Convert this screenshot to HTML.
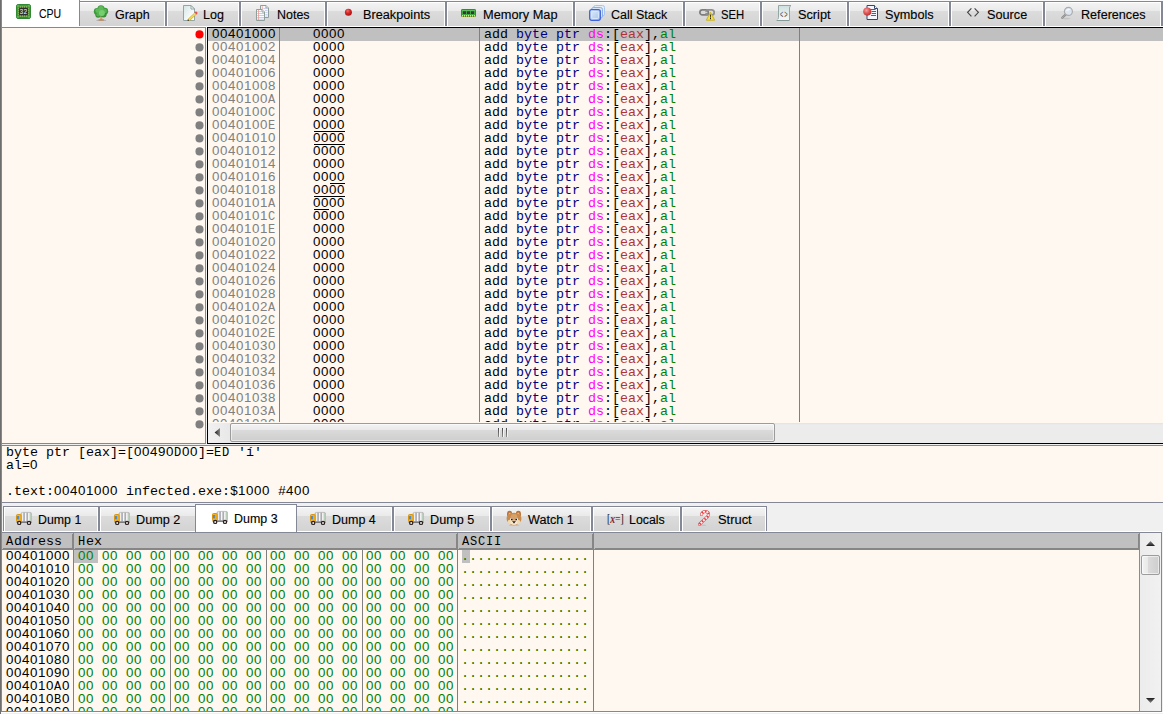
<!DOCTYPE html>
<html lang="en"><head><meta charset="utf-8"><title>x32dbg</title>
<style>
*{box-sizing:border-box;margin:0;padding:0}
html,body{width:1163px;height:714px;overflow:hidden;background:#f0f0f0}
body{position:relative;font-family:"Liberation Sans",sans-serif;font-size:12.5px;color:#000}
.a{position:absolute}
.m{font-family:"Liberation Mono",monospace;font-size:13.333px;line-height:13px;white-space:pre}
.tab{position:absolute;top:1px;height:25px;border:1px solid #848896;border-bottom:0;
 background:linear-gradient(#f4f4f4 0,#eaeaea 9px,#dcdcdc 9px,#d3d3d3 100%);box-shadow:inset 1px 1px 0 #fff,inset -1px 0 0 #fff}
.tab.on{background:#fff;box-shadow:none}
.tl{position:absolute;white-space:pre;line-height:16px;height:16px;transform-origin:0 0;-webkit-text-stroke:.12px #000}
.ic{position:absolute;width:16px;height:16px;overflow:visible}
.row{position:absolute;left:0;height:13px;width:1163px}
.row>span{position:absolute;top:0}
.ad{left:212px;color:#808080}
.by{left:313px}
.in{left:484px}
.k{color:#000080}.s{color:#f0f}.r{color:#b03434}.g{color:#008300}
.bl{position:absolute;left:195.5px;width:8px;height:8px;border-radius:50%;background:#808080}
.vs{position:absolute;width:1px;background:#808080}
.hx{color:#008000}
.d{font-family:"Liberation Sans",sans-serif;letter-spacing:.5847px;word-spacing:3.7109px;line-height:0}
.u{font-size:12px;letter-spacing:.8px;line-height:0}
</style></head>
<body>
<div class="a" style="left:0;top:0;width:1163px;height:28px;background:#f0f0f0"></div>
<div class="a" style="left:0;top:0;width:1163px;height:1px;background:#fbfbfb"></div>
<div class="tab" style="left:78px;width:88px;top:1px"></div><div class="ic" style="left:93px;top:5px"><svg width="16" height="16" viewBox="0 0 16 16"><ellipse cx="8.2" cy="15.4" rx="5" ry="0.9" fill="#b5b5b5"/><path d="M7 15 L7.4 10.5 L9.2 10.5 L9.4 15 Z" fill="#d9a066"/><path d="M8.3 12 L10.3 10" stroke="#c98a4b" stroke-width="1"/><rect x="5.4" y="14.4" width="5.6" height="1.1" rx="0.4" fill="#b8763a"/><circle cx="8" cy="3.8" r="3.6" fill="#3f983c"/><circle cx="4.2" cy="6.4" r="3.4" fill="#3f983c"/><circle cx="11.8" cy="6.2" r="3.4" fill="#3f983c"/><circle cx="5.2" cy="9.8" r="2.9" fill="#3a8f37"/><circle cx="10.6" cy="9.6" r="3" fill="#3a8f37"/><circle cx="8" cy="7" r="4" fill="#48a544"/><circle cx="8" cy="3.6" r="2.6" fill="#5fbb59"/><circle cx="4.6" cy="5.8" r="2.3" fill="#5fbb59"/><circle cx="11.6" cy="6" r="2.3" fill="#58b353"/><circle cx="5.2" cy="9.6" r="2" fill="#55b050"/><circle cx="8.8" cy="8" r="3" fill="#74d06d"/></svg></div><div class="tl" style="left:114.87px;top:7px;transform:scaleX(0.9970)">Graph</div><div class="tab" style="left:166px;width:74px;top:1px"></div><div class="ic" style="left:182px;top:5px"><svg width="16" height="16" viewBox="0 0 16 16"><defs><linearGradient id="gpg" x1="0" y1="0" x2="1" y2="1"><stop offset="0" stop-color="#d5e4e4"/><stop offset="0.6" stop-color="#f4f8f8"/><stop offset="1" stop-color="#fff"/></linearGradient></defs><path d="M1.5 0.5 H9 L12.5 4 V15.5 H1.5 Z" fill="url(#gpg)" stroke="#93a5a5" stroke-width="1"/><path d="M9 0.5 V4 H12.5 Z" fill="#fff" stroke="#93a5a5" stroke-width="1" stroke-linejoin="round"/><path d="M6.3 15.4 L13.4 8.6" stroke="#c9a21e" stroke-width="2.6"/><path d="M6.3 15.4 L13.4 8.6" stroke="#f4dc4e" stroke-width="1.6"/><path d="M5.6 16 L6 14.3 L7.4 15.6 Z" fill="#222"/><circle cx="14" cy="8" r="1.5" fill="#e8504c"/><path d="M12.7 9.2 L13.3 8.6" stroke="#eee" stroke-width="1.4"/></svg></div><div class="tl" style="left:202.57px;top:7px;transform:scaleX(1.0040)">Log</div><div class="tab" style="left:240px;width:86px;top:1px"></div><div class="ic" style="left:255px;top:5px"><svg width="16" height="16" viewBox="0 0 16 16"><path d="M5.5 0.5 H11 L13.5 3 V12.5 H5.5 Z" fill="#f7f9ff" stroke="#8f9f9c"/><path d="M11 0.5 V3 H13.5" fill="#fff" stroke="#8f9f9c"/><path d="M7.3 1.2 V5" stroke="#eb9a9a" stroke-width="0.8"/><g stroke="#bcc8ee" stroke-width="0.8"><path d="M8.4 3.5H12.6M10 5.5H12.6M10.4 7.5H12.6M10.4 9.5H12.6M10.4 11H12.6"/></g><path d="M1.5 4.5 H7 L9.5 7 V15.5 H1.5 Z" fill="#fbfcff" stroke="#8f9f9c"/><path d="M7 4.5 V7 H9.5" fill="#fff" stroke="#8f9f9c"/><g stroke="#b4c1ee" stroke-width="0.8"><path d="M2.2 6.5H6.6M2.2 8.5H9M2.2 10.5H9M2.2 12.5H9M2.2 14.2H9"/></g><path d="M3.5 5 V15" stroke="#ee9a9a" stroke-width="0.8"/></svg></div><div class="tl" style="left:276.58px;top:7px;transform:scaleX(0.9975)">Notes</div><div class="tab" style="left:326px;width:120px;top:1px"></div><div class="ic" style="left:340.5px;top:5px"><svg width="16" height="16" viewBox="0 0 16 16"><defs><radialGradient id="gbp" cx="0.4" cy="0.3" r="0.75"><stop offset="0" stop-color="#f07070"/><stop offset="0.45" stop-color="#d62525"/><stop offset="1" stop-color="#a01212"/></radialGradient></defs><circle cx="7.4" cy="7.3" r="3.5" fill="url(#gbp)"/></svg></div><div class="tl" style="left:362.56px;top:7px;transform:scaleX(1.0165)">Breakpoints</div><div class="tab" style="left:446px;width:128px;top:1px"></div><div class="ic" style="left:461px;top:5px"><svg width="16" height="16" viewBox="0 0 16 16"><rect x="0.5" y="4.5" width="14" height="7" rx="0.6" fill="#3fa53f" stroke="#2f8f2f"/><rect x="1" y="5" width="13" height="1" fill="#5cc05c"/><g fill="#3a3340"><rect x="2" y="6.3" width="3" height="2.7"/><rect x="6" y="6.3" width="3" height="2.7"/><rect x="10" y="6.3" width="3" height="2.7"/></g><g fill="#f0dc7a"><rect x="1" y="10" width="1" height="1.6"/><rect x="3" y="10" width="1" height="1.6"/><rect x="5" y="10" width="1" height="1.6"/><rect x="7" y="10" width="1" height="1.6"/><rect x="9" y="10" width="1" height="1.6"/><rect x="11" y="10" width="1" height="1.6"/><rect x="13" y="10" width="1" height="1.6"/></g></svg></div><div class="tl" style="left:482.55px;top:7px;transform:scaleX(1.0227)">Memory Map</div><div class="tab" style="left:574px;width:110px;top:1px"></div><div class="ic" style="left:589px;top:5px"><svg width="16" height="16" viewBox="0 0 16 16"><defs><linearGradient id="gst" x1="0" y1="0" x2="1" y2="1"><stop offset="0" stop-color="#e4eefa"/><stop offset="1" stop-color="#9fc0ea"/></linearGradient></defs><rect x="4.5" y="0.5" width="11" height="10.5" rx="2" fill="#e4edf8" stroke="#a9c4ea"/><rect x="2.5" y="2.5" width="11" height="10.5" rx="2" fill="#d6e4f6" stroke="#8eb0e2"/><rect x="0.7" y="4.7" width="10.6" height="10.6" rx="2" fill="url(#gst)" stroke="#3d63e0" stroke-width="1.3"/><rect x="2.6" y="6.6" width="6.8" height="6.8" rx="0.8" fill="none" stroke="#dbe8f8" stroke-width="1"/></svg></div><div class="tl" style="left:610.86px;top:7px;transform:scaleX(1.0009)">Call Stack</div><div class="tab" style="left:684px;width:77px;top:1px"></div><div class="ic" style="left:699px;top:5px"><svg width="16" height="16" viewBox="0 0 16 16"><rect x="0.9" y="4.9" width="8.4" height="5" rx="2.5" fill="none" stroke="#7d7d7d" stroke-width="1.7"/><rect x="7" y="4.9" width="8.2" height="5" rx="2.5" fill="none" stroke="#8e8e8e" stroke-width="1.7"/><path d="M2.6 7.4 H8" stroke="#d8d8d8" stroke-width="1"/><path d="M11.5 7.3 L15.7 15.2 H7.3 Z" fill="#f5e13c" stroke="#c8ae16" stroke-width="0.9" stroke-linejoin="round"/><rect x="11" y="9.6" width="1" height="1.2" fill="#111"/><rect x="11" y="11.3" width="1" height="1.2" fill="#111"/><rect x="11" y="13.1" width="1" height="1.1" fill="#111"/></svg></div><div class="tl" style="left:721.09px;top:7px;transform:scaleX(0.9040)">SEH</div><div class="tab" style="left:761px;width:87px;top:1px"></div><div class="ic" style="left:776px;top:5px"><svg width="16" height="16" viewBox="0 0 16 16"><defs><linearGradient id="gsc" x1="0" y1="0" x2="0" y2="1"><stop offset="0" stop-color="#cfe0df"/><stop offset="1" stop-color="#f6f9f9"/></linearGradient></defs><path d="M2.5 0.5 H15 Q13.5 1.2 13.5 3 V15 H1 Q2.5 14 2.5 12.5 Z" fill="url(#gsc)" stroke="#93a7a5" stroke-width="1"/><path d="M1.4 14.7 H13" stroke="#f6fafa" stroke-width="1.2"/><path d="M0.6 15.6 H13.4" stroke="#7f9492" stroke-width="1"/><text transform="translate(3.9 12.6) scale(.62 1.2)" font-family="Liberation Sans,sans-serif" font-size="9" fill="#4a4a4a" letter-spacing="1.6">&lt;&gt;</text></svg></div><div class="tl" style="left:798.22px;top:7px;transform:scaleX(1.0194)">Script</div><div class="tab" style="left:848px;width:102px;top:1px"></div><div class="ic" style="left:863px;top:5px"><svg width="16" height="16" viewBox="0 0 16 16"><path d="M4 0.5 H11.5 L14.5 3.5 V14.5 H4 Z" fill="#f4f7ff" stroke="#34466a" stroke-width="1"/><path d="M11.5 0.5 V3.5 H14.5" fill="#fff" stroke="#34466a" stroke-width="1"/><g stroke="#2f5fe0" stroke-width="1"><path d="M7 4.5H12.6M8.6 6.5H13M8.6 8.5H13M8 10.5H13"/></g><defs><radialGradient id="gsy" cx="0.4" cy="0.35" r="0.75"><stop offset="0" stop-color="#f3a3a0"/><stop offset="0.5" stop-color="#dc5452"/><stop offset="1" stop-color="#b02424"/></radialGradient></defs><circle cx="4.3" cy="6.6" r="4.1" fill="url(#gsy)"/></svg></div><div class="tl" style="left:885.02px;top:7px;transform:scaleX(1.0147)">Symbols</div><div class="tab" style="left:950px;width:94px;top:1px"></div><div class="ic" style="left:966px;top:5px"><svg width="16" height="16" viewBox="0 0 16 16"><path d="M5.4 3.3 L1.6 7.3 L5.4 11.3 M8.6 3.3 L12.4 7.3 L8.6 11.3" fill="none" stroke="#444" stroke-width="1.15"/></svg></div><div class="tl" style="left:987.02px;top:7px;transform:scaleX(1.0160)">Source</div><div class="tab" style="left:1044px;width:118px;top:1px"></div><div class="ic" style="left:1060px;top:5px"><svg width="16" height="16" viewBox="0 0 16 16"><ellipse cx="6" cy="13.6" rx="4.5" ry="0.8" fill="#c4c4c4"/><path d="M2.2 12.8 L5.6 9.6" stroke="#8d8d8d" stroke-width="2.2" stroke-linecap="round"/><path d="M2.4 12.6 L5.6 9.6" stroke="#d8d8d8" stroke-width="0.8" stroke-dasharray="0.8 0.8"/><circle cx="8.4" cy="6.4" r="4" fill="#dce6f2" stroke="#ababab" stroke-width="1.2"/><path d="M5.8 6.2 A2.8 2.8 0 0 1 10.4 4.4 L8.6 5.6 Z" fill="#f4f8fc"/></svg></div><div class="tl" style="left:1080.87px;top:7px;transform:scaleX(1.0089)">References</div><div class="tab on" style="left:1px;width:79px;top:-1px;height:28px"></div><div class="ic" style="left:16px;top:4px"><svg width="16" height="16" viewBox="0 0 16 16"><rect x="0.5" y="0.5" width="14" height="14" rx="1.6" fill="#3f9f41" stroke="#2f8a33" stroke-width="1"/><rect x="1" y="13" width="13" height="1.5" fill="#2c7d30" opacity="0.6"/><g fill="#ead98a"><rect x="4" y="2.6" width="1" height="1.9"/><rect x="4" y="10.5" width="1" height="1.9"/><rect x="6" y="2.6" width="1" height="1.9"/><rect x="6" y="10.5" width="1" height="1.9"/><rect x="8" y="2.6" width="1" height="1.9"/><rect x="8" y="10.5" width="1" height="1.9"/><rect x="10" y="2.6" width="1" height="1.9"/><rect x="10" y="10.5" width="1" height="1.9"/><rect x="2.6" y="4" width="1.9" height="1"/><rect x="10.5" y="4" width="1.9" height="1"/><rect x="2.6" y="6" width="1.9" height="1"/><rect x="10.5" y="6" width="1.9" height="1"/><rect x="2.6" y="8" width="1.9" height="1"/><rect x="10.5" y="8" width="1.9" height="1"/><rect x="2.6" y="10" width="1.9" height="1"/><rect x="10.5" y="10" width="1.9" height="1"/><rect x="1.5" y="1.5" width="1" height="1"/><rect x="12.5" y="1.5" width="1" height="1"/><rect x="1.5" y="12.5" width="1" height="1"/><rect x="12.5" y="12.5" width="1" height="1"/></g><rect x="3" y="3.6" width="9" height="7.8" rx="1" fill="#2e2e2e"/><text x="7.5" y="9.8" font-family="Liberation Mono,monospace" font-size="6.3" fill="#f4f4f4" text-anchor="middle" letter-spacing="0.2">32</text></svg></div><div class="tl" style="left:38.67px;top:6px;transform:scaleX(0.8390)">CPU</div>
<div class="tab" style="left:1162px;width:40px;top:1px"></div>
<div class="a" style="left:2px;top:26px;width:1161px;height:1px;background:#fff"></div>
<div class="a" style="left:1px;top:27px;width:206px;height:1px;background:#848896"></div>
<div class="a" style="left:2px;top:28px;width:1161px;height:416px;background:#fff8f0"></div>
<div class="a" style="left:205px;top:27px;width:1px;height:417px;background:#848896"></div>
<div class="a" style="left:206px;top:26px;width:1px;height:419px;background:#f4f4f4"></div>
<div class="a" style="left:2px;top:443px;width:204px;height:1px;background:#848896"></div>
<div class="a" style="left:207px;top:27px;width:956px;height:1px;background:#000"></div>
<div class="a" style="left:207px;top:27px;width:1px;height:417px;background:#000"></div>
<div class="a" style="left:207px;top:443px;width:956px;height:1px;background:#000"></div>
<div class="a" style="left:208px;top:28px;width:955px;height:13px;background:#c0c0c0"></div>
<div class="vs" style="left:279px;top:28px;height:394px"></div>
<div class="vs" style="left:479px;top:28px;height:394px"></div>
<div class="vs" style="left:799px;top:28px;height:394px"></div>
<div class="a m" style="left:0;top:28px;width:1163px;height:394px;overflow:hidden">
<div class="row" style="top:0px"><span class="ad" style="color:#000"><span class="d">00401000</span></span><span class="by"><span class="d">0000</span></span><span class="in">add <span class="k">byte ptr</span> <span class="s">ds</span>:[<span class="r">eax</span>],<span class="g">al</span></span></div>
<div class="row" style="top:13px"><span class="ad"><span class="d">00401002</span></span><span class="by"><span class="d">0000</span></span><span class="in">add <span class="k">byte ptr</span> <span class="s">ds</span>:[<span class="r">eax</span>],<span class="g">al</span></span></div>
<div class="row" style="top:26px"><span class="ad"><span class="d">00401004</span></span><span class="by"><span class="d">0000</span></span><span class="in">add <span class="k">byte ptr</span> <span class="s">ds</span>:[<span class="r">eax</span>],<span class="g">al</span></span></div>
<div class="row" style="top:39px"><span class="ad"><span class="d">00401006</span></span><span class="by"><span class="d">0000</span></span><span class="in">add <span class="k">byte ptr</span> <span class="s">ds</span>:[<span class="r">eax</span>],<span class="g">al</span></span></div>
<div class="row" style="top:52px"><span class="ad"><span class="d">00401008</span></span><span class="by"><span class="d">0000</span></span><span class="in">add <span class="k">byte ptr</span> <span class="s">ds</span>:[<span class="r">eax</span>],<span class="g">al</span></span></div>
<div class="row" style="top:65px"><span class="ad"><span class="d">0040100</span><span class="u">A</span></span><span class="by"><span class="d">0000</span></span><span class="in">add <span class="k">byte ptr</span> <span class="s">ds</span>:[<span class="r">eax</span>],<span class="g">al</span></span></div>
<div class="row" style="top:78px"><span class="ad"><span class="d">0040100</span><span class="u">C</span></span><span class="by"><span class="d">0000</span></span><span class="in">add <span class="k">byte ptr</span> <span class="s">ds</span>:[<span class="r">eax</span>],<span class="g">al</span></span></div>
<div class="row" style="top:91px"><span class="ad"><span class="d">0040100</span><span class="u">E</span></span><span class="by"><span class="d">0000</span></span><span class="in">add <span class="k">byte ptr</span> <span class="s">ds</span>:[<span class="r">eax</span>],<span class="g">al</span></span></div>
<div class="row" style="top:104px"><span class="ad"><span class="d">00401010</span></span><span class="by"><span class="d">0000</span></span><span class="in">add <span class="k">byte ptr</span> <span class="s">ds</span>:[<span class="r">eax</span>],<span class="g">al</span></span></div>
<div class="row" style="top:117px"><span class="ad"><span class="d">00401012</span></span><span class="by"><span class="d">0000</span></span><span class="in">add <span class="k">byte ptr</span> <span class="s">ds</span>:[<span class="r">eax</span>],<span class="g">al</span></span></div>
<div class="row" style="top:130px"><span class="ad"><span class="d">00401014</span></span><span class="by"><span class="d">0000</span></span><span class="in">add <span class="k">byte ptr</span> <span class="s">ds</span>:[<span class="r">eax</span>],<span class="g">al</span></span></div>
<div class="row" style="top:143px"><span class="ad"><span class="d">00401016</span></span><span class="by"><span class="d">0000</span></span><span class="in">add <span class="k">byte ptr</span> <span class="s">ds</span>:[<span class="r">eax</span>],<span class="g">al</span></span></div>
<div class="row" style="top:156px"><span class="ad"><span class="d">00401018</span></span><span class="by"><span class="d">0000</span></span><span class="in">add <span class="k">byte ptr</span> <span class="s">ds</span>:[<span class="r">eax</span>],<span class="g">al</span></span></div>
<div class="row" style="top:169px"><span class="ad"><span class="d">0040101</span><span class="u">A</span></span><span class="by"><span class="d">0000</span></span><span class="in">add <span class="k">byte ptr</span> <span class="s">ds</span>:[<span class="r">eax</span>],<span class="g">al</span></span></div>
<div class="row" style="top:182px"><span class="ad"><span class="d">0040101</span><span class="u">C</span></span><span class="by"><span class="d">0000</span></span><span class="in">add <span class="k">byte ptr</span> <span class="s">ds</span>:[<span class="r">eax</span>],<span class="g">al</span></span></div>
<div class="row" style="top:195px"><span class="ad"><span class="d">0040101</span><span class="u">E</span></span><span class="by"><span class="d">0000</span></span><span class="in">add <span class="k">byte ptr</span> <span class="s">ds</span>:[<span class="r">eax</span>],<span class="g">al</span></span></div>
<div class="row" style="top:208px"><span class="ad"><span class="d">00401020</span></span><span class="by"><span class="d">0000</span></span><span class="in">add <span class="k">byte ptr</span> <span class="s">ds</span>:[<span class="r">eax</span>],<span class="g">al</span></span></div>
<div class="row" style="top:221px"><span class="ad"><span class="d">00401022</span></span><span class="by"><span class="d">0000</span></span><span class="in">add <span class="k">byte ptr</span> <span class="s">ds</span>:[<span class="r">eax</span>],<span class="g">al</span></span></div>
<div class="row" style="top:234px"><span class="ad"><span class="d">00401024</span></span><span class="by"><span class="d">0000</span></span><span class="in">add <span class="k">byte ptr</span> <span class="s">ds</span>:[<span class="r">eax</span>],<span class="g">al</span></span></div>
<div class="row" style="top:247px"><span class="ad"><span class="d">00401026</span></span><span class="by"><span class="d">0000</span></span><span class="in">add <span class="k">byte ptr</span> <span class="s">ds</span>:[<span class="r">eax</span>],<span class="g">al</span></span></div>
<div class="row" style="top:260px"><span class="ad"><span class="d">00401028</span></span><span class="by"><span class="d">0000</span></span><span class="in">add <span class="k">byte ptr</span> <span class="s">ds</span>:[<span class="r">eax</span>],<span class="g">al</span></span></div>
<div class="row" style="top:273px"><span class="ad"><span class="d">0040102</span><span class="u">A</span></span><span class="by"><span class="d">0000</span></span><span class="in">add <span class="k">byte ptr</span> <span class="s">ds</span>:[<span class="r">eax</span>],<span class="g">al</span></span></div>
<div class="row" style="top:286px"><span class="ad"><span class="d">0040102</span><span class="u">C</span></span><span class="by"><span class="d">0000</span></span><span class="in">add <span class="k">byte ptr</span> <span class="s">ds</span>:[<span class="r">eax</span>],<span class="g">al</span></span></div>
<div class="row" style="top:299px"><span class="ad"><span class="d">0040102</span><span class="u">E</span></span><span class="by"><span class="d">0000</span></span><span class="in">add <span class="k">byte ptr</span> <span class="s">ds</span>:[<span class="r">eax</span>],<span class="g">al</span></span></div>
<div class="row" style="top:312px"><span class="ad"><span class="d">00401030</span></span><span class="by"><span class="d">0000</span></span><span class="in">add <span class="k">byte ptr</span> <span class="s">ds</span>:[<span class="r">eax</span>],<span class="g">al</span></span></div>
<div class="row" style="top:325px"><span class="ad"><span class="d">00401032</span></span><span class="by"><span class="d">0000</span></span><span class="in">add <span class="k">byte ptr</span> <span class="s">ds</span>:[<span class="r">eax</span>],<span class="g">al</span></span></div>
<div class="row" style="top:338px"><span class="ad"><span class="d">00401034</span></span><span class="by"><span class="d">0000</span></span><span class="in">add <span class="k">byte ptr</span> <span class="s">ds</span>:[<span class="r">eax</span>],<span class="g">al</span></span></div>
<div class="row" style="top:351px"><span class="ad"><span class="d">00401036</span></span><span class="by"><span class="d">0000</span></span><span class="in">add <span class="k">byte ptr</span> <span class="s">ds</span>:[<span class="r">eax</span>],<span class="g">al</span></span></div>
<div class="row" style="top:364px"><span class="ad"><span class="d">00401038</span></span><span class="by"><span class="d">0000</span></span><span class="in">add <span class="k">byte ptr</span> <span class="s">ds</span>:[<span class="r">eax</span>],<span class="g">al</span></span></div>
<div class="row" style="top:377px"><span class="ad"><span class="d">0040103</span><span class="u">A</span></span><span class="by"><span class="d">0000</span></span><span class="in">add <span class="k">byte ptr</span> <span class="s">ds</span>:[<span class="r">eax</span>],<span class="g">al</span></span></div>
<div class="row" style="top:390px"><span class="ad"><span class="d">0040103</span><span class="u">C</span></span><span class="by"><span class="d">0000</span></span><span class="in">add <span class="k">byte ptr</span> <span class="s">ds</span>:[<span class="r">eax</span>],<span class="g">al</span></span></div>
</div>
<svg class="a" style="left:190px;top:28px" width="16" height="415" viewBox="0 0 16 415"><circle cx="9.5" cy="6.4" r="4.05" fill="#ff0000"/><circle cx="9.5" cy="19.4" r="4.05" fill="#808080"/><circle cx="9.5" cy="32.4" r="4.05" fill="#808080"/><circle cx="9.5" cy="45.4" r="4.05" fill="#808080"/><circle cx="9.5" cy="58.4" r="4.05" fill="#808080"/><circle cx="9.5" cy="71.4" r="4.05" fill="#808080"/><circle cx="9.5" cy="84.4" r="4.05" fill="#808080"/><circle cx="9.5" cy="97.4" r="4.05" fill="#808080"/><circle cx="9.5" cy="110.4" r="4.05" fill="#808080"/><circle cx="9.5" cy="123.4" r="4.05" fill="#808080"/><circle cx="9.5" cy="136.4" r="4.05" fill="#808080"/><circle cx="9.5" cy="149.4" r="4.05" fill="#808080"/><circle cx="9.5" cy="162.4" r="4.05" fill="#808080"/><circle cx="9.5" cy="175.4" r="4.05" fill="#808080"/><circle cx="9.5" cy="188.4" r="4.05" fill="#808080"/><circle cx="9.5" cy="201.4" r="4.05" fill="#808080"/><circle cx="9.5" cy="214.4" r="4.05" fill="#808080"/><circle cx="9.5" cy="227.4" r="4.05" fill="#808080"/><circle cx="9.5" cy="240.4" r="4.05" fill="#808080"/><circle cx="9.5" cy="253.4" r="4.05" fill="#808080"/><circle cx="9.5" cy="266.4" r="4.05" fill="#808080"/><circle cx="9.5" cy="279.4" r="4.05" fill="#808080"/><circle cx="9.5" cy="292.4" r="4.05" fill="#808080"/><circle cx="9.5" cy="305.4" r="4.05" fill="#808080"/><circle cx="9.5" cy="318.4" r="4.05" fill="#808080"/><circle cx="9.5" cy="331.4" r="4.05" fill="#808080"/><circle cx="9.5" cy="344.4" r="4.05" fill="#808080"/><circle cx="9.5" cy="357.4" r="4.05" fill="#808080"/><circle cx="9.5" cy="370.4" r="4.05" fill="#808080"/><circle cx="9.5" cy="383.4" r="4.05" fill="#808080"/><circle cx="9.5" cy="396.4" r="4.05" fill="#808080"/></svg>
<div class="a" style="left:314px;top:131px;width:31px;height:1px;background:#000"></div>
<div class="a" style="left:314px;top:144px;width:31px;height:1px;background:#000"></div>
<div class="a" style="left:330px;top:183px;width:15px;height:1px;background:#000"></div>
<div class="a" style="left:314px;top:196px;width:31px;height:1px;background:#000"></div>
<div class="a" style="left:314px;top:209px;width:15px;height:1px;background:#000"></div>
<div class="a" style="left:208px;top:423px;width:955px;height:20px;background:linear-gradient(#e2e2e2 0,#ececec 2px,#ececec 100%)"></div>
<div class="a" style="left:208px;top:423px;width:22px;height:20px;background:linear-gradient(90deg,#f1f1f1,#e8e8e8)"></div>
<svg class="a" style="left:213px;top:426px" width="9" height="13" viewBox="0 0 9 13"><defs><linearGradient id="ga" x1="0" x2="1" y1="0" y2="0"><stop offset="0" stop-color="#1a1a1a"/><stop offset="1" stop-color="#8a8a8a"/></linearGradient></defs><path d="M1.6 6.5 L7 2 L7 11 Z" fill="url(#ga)"/></svg>
<div class="a" style="left:230px;top:423px;width:545px;height:19px;border:1px solid #9c9c9c;border-radius:2px;background:linear-gradient(#f2f2f2 0,#e9e9e9 6px,#dbdbdb 6px,#cecece 100%);box-shadow:inset 0 0 0 1px rgba(255,255,255,.55)"></div>
<div class="a" style="left:498px;top:428px;width:1px;height:9px;background:linear-gradient(#4a4a4a,#8a8a8a)"></div>
<div class="a" style="left:499px;top:428px;width:1px;height:9px;background:#f4f4f4"></div>
<div class="a" style="left:502px;top:428px;width:1px;height:9px;background:linear-gradient(#4a4a4a,#8a8a8a)"></div>
<div class="a" style="left:503px;top:428px;width:1px;height:9px;background:#f4f4f4"></div>
<div class="a" style="left:506px;top:428px;width:1px;height:9px;background:linear-gradient(#4a4a4a,#8a8a8a)"></div>
<div class="a" style="left:507px;top:428px;width:1px;height:9px;background:#f4f4f4"></div>
<div class="a" style="left:1px;top:444px;width:1162px;height:1px;background:#f0f0f0"></div>
<div class="a" style="left:1px;top:445px;width:1162px;height:58px;background:#fff8f0;border-top:1px solid #848896;border-bottom:1px solid #848896;border-left:1px solid #848896"></div>
<div class="a m" style="left:6px;top:446px;height:13px">byte ptr [eax]=[<span class="d">00490</span><span class="u">D</span><span class="d">00</span>]=<span class="u">ED</span> 'í'</div>
<div class="a m" style="left:6px;top:459px;height:13px">al=<span class="d">0</span></div>
<div class="a m" style="left:6px;top:485px;height:13px">.text:<span class="d">00401000</span> infected.exe:$<span class="d">1000</span> #<span class="d">400</span></div>
<div class="a" style="left:1px;top:503px;width:1162px;height:30px;background:#f0f0f0"></div>
<div class="a" style="left:2px;top:531px;width:1160px;height:1px;background:#fff"></div>
<div class="a" style="left:1px;top:532px;width:1161px;height:1px;background:#848896"></div>
<div class="tab" style="left:3px;width:96px;top:506px"></div><div class="ic" style="left:16px;top:510px"><svg width="16" height="16" viewBox="0 0 16 16"><defs><linearGradient id="gdu" x1="0" y1="0" x2="1" y2="0"><stop offset="0" stop-color="#a9a9b3"/><stop offset="0.12" stop-color="#fafafa"/><stop offset="0.3" stop-color="#9a9aa4"/><stop offset="0.42" stop-color="#fafafa"/><stop offset="0.6" stop-color="#a2a2a8"/><stop offset="0.72" stop-color="#fafafa"/><stop offset="0.9" stop-color="#b9ccb9"/><stop offset="1" stop-color="#d8d8d8"/></linearGradient></defs><rect x="5" y="2.4" width="10.6" height="9.4" rx="1.5" fill="url(#gdu)" stroke="#b3b3b3" stroke-width="0.8"/><rect x="0.5" y="4.5" width="4.6" height="7.2" rx="1" fill="#f7b51f" stroke="#d9950f"/><rect x="1" y="6" width="2.2" height="3.4" fill="#4f8ccc"/><rect x="0.6" y="11.6" width="15" height="1.2" fill="#666"/><circle cx="3.2" cy="12.9" r="1.6" fill="#e8e8e8" stroke="#2a1c1c" stroke-width="1.2"/><circle cx="13" cy="12.9" r="1.6" fill="#e8e8e8" stroke="#2a1c1c" stroke-width="1.2"/></svg></div><div class="tl" style="left:37.99px;top:512px;transform:scaleX(0.9897)">Dump 1</div><div class="tab" style="left:99px;width:98px;top:506px"></div><div class="ic" style="left:114px;top:510px"><svg width="16" height="16" viewBox="0 0 16 16"><defs><linearGradient id="gdu" x1="0" y1="0" x2="1" y2="0"><stop offset="0" stop-color="#a9a9b3"/><stop offset="0.12" stop-color="#fafafa"/><stop offset="0.3" stop-color="#9a9aa4"/><stop offset="0.42" stop-color="#fafafa"/><stop offset="0.6" stop-color="#a2a2a8"/><stop offset="0.72" stop-color="#fafafa"/><stop offset="0.9" stop-color="#b9ccb9"/><stop offset="1" stop-color="#d8d8d8"/></linearGradient></defs><rect x="5" y="2.4" width="10.6" height="9.4" rx="1.5" fill="url(#gdu)" stroke="#b3b3b3" stroke-width="0.8"/><rect x="0.5" y="4.5" width="4.6" height="7.2" rx="1" fill="#f7b51f" stroke="#d9950f"/><rect x="1" y="6" width="2.2" height="3.4" fill="#4f8ccc"/><rect x="0.6" y="11.6" width="15" height="1.2" fill="#666"/><circle cx="3.2" cy="12.9" r="1.6" fill="#e8e8e8" stroke="#2a1c1c" stroke-width="1.2"/><circle cx="13" cy="12.9" r="1.6" fill="#e8e8e8" stroke="#2a1c1c" stroke-width="1.2"/></svg></div><div class="tl" style="left:135.66px;top:512px;transform:scaleX(1.0139)">Dump 2</div><div class="tab" style="left:295px;width:98px;top:506px"></div><div class="ic" style="left:310px;top:510px"><svg width="16" height="16" viewBox="0 0 16 16"><defs><linearGradient id="gdu" x1="0" y1="0" x2="1" y2="0"><stop offset="0" stop-color="#a9a9b3"/><stop offset="0.12" stop-color="#fafafa"/><stop offset="0.3" stop-color="#9a9aa4"/><stop offset="0.42" stop-color="#fafafa"/><stop offset="0.6" stop-color="#a2a2a8"/><stop offset="0.72" stop-color="#fafafa"/><stop offset="0.9" stop-color="#b9ccb9"/><stop offset="1" stop-color="#d8d8d8"/></linearGradient></defs><rect x="5" y="2.4" width="10.6" height="9.4" rx="1.5" fill="url(#gdu)" stroke="#b3b3b3" stroke-width="0.8"/><rect x="0.5" y="4.5" width="4.6" height="7.2" rx="1" fill="#f7b51f" stroke="#d9950f"/><rect x="1" y="6" width="2.2" height="3.4" fill="#4f8ccc"/><rect x="0.6" y="11.6" width="15" height="1.2" fill="#666"/><circle cx="3.2" cy="12.9" r="1.6" fill="#e8e8e8" stroke="#2a1c1c" stroke-width="1.2"/><circle cx="13" cy="12.9" r="1.6" fill="#e8e8e8" stroke="#2a1c1c" stroke-width="1.2"/></svg></div><div class="tl" style="left:332.07px;top:512px;transform:scaleX(1.0005)">Dump 4</div><div class="tab" style="left:393px;width:98px;top:506px"></div><div class="ic" style="left:408px;top:510px"><svg width="16" height="16" viewBox="0 0 16 16"><defs><linearGradient id="gdu" x1="0" y1="0" x2="1" y2="0"><stop offset="0" stop-color="#a9a9b3"/><stop offset="0.12" stop-color="#fafafa"/><stop offset="0.3" stop-color="#9a9aa4"/><stop offset="0.42" stop-color="#fafafa"/><stop offset="0.6" stop-color="#a2a2a8"/><stop offset="0.72" stop-color="#fafafa"/><stop offset="0.9" stop-color="#b9ccb9"/><stop offset="1" stop-color="#d8d8d8"/></linearGradient></defs><rect x="5" y="2.4" width="10.6" height="9.4" rx="1.5" fill="url(#gdu)" stroke="#b3b3b3" stroke-width="0.8"/><rect x="0.5" y="4.5" width="4.6" height="7.2" rx="1" fill="#f7b51f" stroke="#d9950f"/><rect x="1" y="6" width="2.2" height="3.4" fill="#4f8ccc"/><rect x="0.6" y="11.6" width="15" height="1.2" fill="#666"/><circle cx="3.2" cy="12.9" r="1.6" fill="#e8e8e8" stroke="#2a1c1c" stroke-width="1.2"/><circle cx="13" cy="12.9" r="1.6" fill="#e8e8e8" stroke="#2a1c1c" stroke-width="1.2"/></svg></div><div class="tl" style="left:429.66px;top:512px;transform:scaleX(1.0114)">Dump 5</div><div class="tab" style="left:491px;width:101px;top:506px"></div><div class="ic" style="left:506px;top:510px"><svg width="16" height="16" viewBox="0 0 16 16"><ellipse cx="8" cy="15.3" rx="5.5" ry="0.8" fill="#c2c2c2"/><ellipse cx="3.6" cy="4.2" rx="2.6" ry="3.4" fill="#b8733a"/><ellipse cx="12.4" cy="4.2" rx="2.6" ry="3.4" fill="#b8733a"/><ellipse cx="3.8" cy="4.6" rx="1.3" ry="2.2" fill="#e6b27a"/><ellipse cx="12.2" cy="4.6" rx="1.3" ry="2.2" fill="#e6b27a"/><ellipse cx="8" cy="9" rx="7.4" ry="6.2" fill="#c98a4c"/><ellipse cx="8" cy="7.2" rx="3.4" ry="3.2" fill="#d9a063"/><ellipse cx="4.2" cy="12" rx="2.6" ry="2.2" fill="#f0d9b0"/><ellipse cx="11.8" cy="12" rx="2.6" ry="2.2" fill="#f0d9b0"/><ellipse cx="8" cy="12.6" rx="3.4" ry="2.4" fill="#f7e8cc"/><circle cx="5.4" cy="9.2" r="1.2" fill="#fff"/><circle cx="10.6" cy="9.2" r="1.2" fill="#fff"/><circle cx="5.8" cy="9.4" r="0.9" fill="#1f1408"/><circle cx="10.2" cy="9.4" r="0.9" fill="#1f1408"/><path d="M6.6 11.4 H9.4 L8 13.2 Z" fill="#2a1a20" stroke="#2a1a20" stroke-width="0.6" stroke-linejoin="round"/></svg></div><div class="tl" style="left:528.44px;top:512px;transform:scaleX(1.0070)">Watch 1</div><div class="tab" style="left:592px;width:89px;top:506px"></div><div class="ic" style="left:606.5px;top:510px"><svg width="17" height="16" viewBox="0 0 17 16"><text x="0" y="12.6" font-family="Liberation Serif,serif" font-size="11.5" fill="#111" textLength="16.8" lengthAdjust="spacingAndGlyphs">[<tspan fill="#8b2323" font-style="italic" font-weight="bold">x</tspan><tspan fill="#444">=</tspan>]</text></svg></div><div class="tl" style="left:628.59px;top:512px;transform:scaleX(0.9897)">Locals</div><div class="tab" style="left:681px;width:86px;top:506px"></div><div class="ic" style="left:696px;top:510px"><svg width="16" height="16" viewBox="0 0 16 16"><ellipse cx="6" cy="15.3" rx="4.5" ry="0.7" fill="#c4c4c4"/><path d="M3.6 14.2 L11.2 7 Q13.4 4.6 12 2.6 Q10.2 0.8 7.6 1.9 Q5.8 2.8 5.5 4.6" fill="none" stroke="#d9383c" stroke-width="3" stroke-linecap="round"/><path d="M3.6 14.2 L11.2 7 Q13.4 4.6 12 2.6 Q10.2 0.8 7.6 1.9 Q5.8 2.8 5.5 4.6" fill="none" stroke="#fdf3f3" stroke-width="2" stroke-linecap="round"/><path d="M3.6 14.2 L11.2 7 Q13.4 4.6 12 2.6 Q10.2 0.8 7.6 1.9 Q5.8 2.8 5.5 4.6" fill="none" stroke="#e0393e" stroke-width="2" stroke-dasharray="1.5 1.9"/></svg></div><div class="tl" style="left:718.11px;top:512px;transform:scaleX(1.0316)">Struct</div><div class="tab on" style="left:195px;width:102px;top:504px;height:28px"></div><div class="ic" style="left:212px;top:509px"><svg width="16" height="16" viewBox="0 0 16 16"><defs><linearGradient id="gdu" x1="0" y1="0" x2="1" y2="0"><stop offset="0" stop-color="#a9a9b3"/><stop offset="0.12" stop-color="#fafafa"/><stop offset="0.3" stop-color="#9a9aa4"/><stop offset="0.42" stop-color="#fafafa"/><stop offset="0.6" stop-color="#a2a2a8"/><stop offset="0.72" stop-color="#fafafa"/><stop offset="0.9" stop-color="#b9ccb9"/><stop offset="1" stop-color="#d8d8d8"/></linearGradient></defs><rect x="5" y="2.4" width="10.6" height="9.4" rx="1.5" fill="url(#gdu)" stroke="#b3b3b3" stroke-width="0.8"/><rect x="0.5" y="4.5" width="4.6" height="7.2" rx="1" fill="#f7b51f" stroke="#d9950f"/><rect x="1" y="6" width="2.2" height="3.4" fill="#4f8ccc"/><rect x="0.6" y="11.6" width="15" height="1.2" fill="#666"/><circle cx="3.2" cy="12.9" r="1.6" fill="#e8e8e8" stroke="#2a1c1c" stroke-width="1.2"/><circle cx="13" cy="12.9" r="1.6" fill="#e8e8e8" stroke="#2a1c1c" stroke-width="1.2"/></svg></div><div class="tl" style="left:233.68px;top:511px;transform:scaleX(0.9954)">Dump 3</div>
<div class="a" style="left:2px;top:533px;width:1159px;height:178px;background:#fff8f0"></div>
<div class="a" style="left:1161px;top:532px;width:1px;height:180px;background:#848896"></div>
<div class="a" style="left:1px;top:711px;width:1161px;height:1px;background:#848896"></div>
<div class="a" style="left:1px;top:712px;width:1162px;height:1px;background:#fff"></div>
<div class="a" style="left:2px;top:533px;width:1138px;height:17px;background:#868686"></div>
<div class="a" style="left:2px;top:533px;width:70px;height:15px;background:#c0c0c0;box-shadow:1px 0 0 #c0c0c0"></div>
<div class="a" style="left:72px;top:534px;width:1px;height:14px;background:#868686"></div>
<div class="a" style="left:2px;top:548px;width:1px;height:1px;background:#c0c0c0"></div>
<div class="a" style="left:74px;top:533px;width:382px;height:15px;background:#c0c0c0;box-shadow:1px 0 0 #c0c0c0"></div>
<div class="a" style="left:456px;top:534px;width:1px;height:14px;background:#868686"></div>
<div class="a" style="left:74px;top:548px;width:1px;height:1px;background:#c0c0c0"></div>
<div class="a" style="left:458px;top:533px;width:134px;height:15px;background:#c0c0c0;box-shadow:1px 0 0 #c0c0c0"></div>
<div class="a" style="left:592px;top:534px;width:1px;height:14px;background:#868686"></div>
<div class="a" style="left:458px;top:548px;width:1px;height:1px;background:#c0c0c0"></div>
<div class="a" style="left:594px;top:533px;width:544px;height:15px;background:#c0c0c0;box-shadow:1px 0 0 #c0c0c0"></div>
<div class="a" style="left:1138px;top:534px;width:1px;height:14px;background:#868686"></div>
<div class="a" style="left:594px;top:548px;width:1px;height:1px;background:#c0c0c0"></div>
<div class="vs" style="left:73px;top:550px;height:161px"></div>
<div class="vs" style="left:457px;top:550px;height:161px"></div>
<div class="vs" style="left:593px;top:550px;height:161px"></div>
<div class="vs" style="left:170px;top:550px;height:161px"></div>
<div class="vs" style="left:266px;top:550px;height:161px"></div>
<div class="vs" style="left:362px;top:550px;height:161px"></div>
<div class="a m" style="left:6px;top:535px;height:13px"><span class="u">A</span>ddress</div>
<div class="a m" style="left:78px;top:535px;height:13px"><span class="u">H</span>ex</div>
<div class="a m" style="left:462px;top:535px;height:13px"><span class="u">ASCII</span></div>
<div class="a" style="left:74px;top:550px;width:24px;height:13px;background:#c0c0c0"></div>
<div class="a" style="left:462px;top:550px;width:8px;height:13px;background:#c0c0c0"></div>
<div class="a m" style="left:0;top:550px;width:1139px;height:161px;overflow:hidden">
<div class="row" style="top:0px"><span style="left:6px"><span class="d">00401000</span></span><span class="hx" style="left:78px"><span class="d">00 00 00 00 00 00 00 00 00 00 00 00 00 00 00 00</span></span><span class="hx" style="left:461px">................</span></div>
<div class="row" style="top:13px"><span style="left:6px"><span class="d">00401010</span></span><span class="hx" style="left:78px"><span class="d">00 00 00 00 00 00 00 00 00 00 00 00 00 00 00 00</span></span><span class="hx" style="left:461px">................</span></div>
<div class="row" style="top:26px"><span style="left:6px"><span class="d">00401020</span></span><span class="hx" style="left:78px"><span class="d">00 00 00 00 00 00 00 00 00 00 00 00 00 00 00 00</span></span><span class="hx" style="left:461px">................</span></div>
<div class="row" style="top:39px"><span style="left:6px"><span class="d">00401030</span></span><span class="hx" style="left:78px"><span class="d">00 00 00 00 00 00 00 00 00 00 00 00 00 00 00 00</span></span><span class="hx" style="left:461px">................</span></div>
<div class="row" style="top:52px"><span style="left:6px"><span class="d">00401040</span></span><span class="hx" style="left:78px"><span class="d">00 00 00 00 00 00 00 00 00 00 00 00 00 00 00 00</span></span><span class="hx" style="left:461px">................</span></div>
<div class="row" style="top:65px"><span style="left:6px"><span class="d">00401050</span></span><span class="hx" style="left:78px"><span class="d">00 00 00 00 00 00 00 00 00 00 00 00 00 00 00 00</span></span><span class="hx" style="left:461px">................</span></div>
<div class="row" style="top:78px"><span style="left:6px"><span class="d">00401060</span></span><span class="hx" style="left:78px"><span class="d">00 00 00 00 00 00 00 00 00 00 00 00 00 00 00 00</span></span><span class="hx" style="left:461px">................</span></div>
<div class="row" style="top:91px"><span style="left:6px"><span class="d">00401070</span></span><span class="hx" style="left:78px"><span class="d">00 00 00 00 00 00 00 00 00 00 00 00 00 00 00 00</span></span><span class="hx" style="left:461px">................</span></div>
<div class="row" style="top:104px"><span style="left:6px"><span class="d">00401080</span></span><span class="hx" style="left:78px"><span class="d">00 00 00 00 00 00 00 00 00 00 00 00 00 00 00 00</span></span><span class="hx" style="left:461px">................</span></div>
<div class="row" style="top:117px"><span style="left:6px"><span class="d">00401090</span></span><span class="hx" style="left:78px"><span class="d">00 00 00 00 00 00 00 00 00 00 00 00 00 00 00 00</span></span><span class="hx" style="left:461px">................</span></div>
<div class="row" style="top:130px"><span style="left:6px"><span class="d">004010</span><span class="u">A</span><span class="d">0</span></span><span class="hx" style="left:78px"><span class="d">00 00 00 00 00 00 00 00 00 00 00 00 00 00 00 00</span></span><span class="hx" style="left:461px">................</span></div>
<div class="row" style="top:143px"><span style="left:6px"><span class="d">004010</span><span class="u">B</span><span class="d">0</span></span><span class="hx" style="left:78px"><span class="d">00 00 00 00 00 00 00 00 00 00 00 00 00 00 00 00</span></span><span class="hx" style="left:461px">................</span></div>
<div class="row" style="top:156px"><span style="left:6px"><span class="d">004010</span><span class="u">C</span><span class="d">0</span></span><span class="hx" style="left:78px"><span class="d">00 00 00 00 00 00 00 00 00 00 00 00 00 00 00 00</span></span><span class="hx" style="left:461px">................</span></div>
</div>
<div class="a" style="left:1139px;top:533px;width:1px;height:178px;background:#8c8c8c"></div>
<div class="a" style="left:1140px;top:533px;width:21px;height:178px;background:linear-gradient(90deg,#ececec,#f1f1f1)"></div>
<svg class="a" style="left:1145px;top:540px" width="11" height="7" viewBox="0 0 11 7"><defs><linearGradient id="gu" x1="0" x2="0" y1="0" y2="1"><stop offset="0" stop-color="#8a8a8a"/><stop offset="1" stop-color="#1a1a1a"/></linearGradient></defs><path d="M5.5 1 L10 6 L1 6 Z" fill="url(#gu)"/></svg>
<svg class="a" style="left:1145px;top:697px" width="11" height="7" viewBox="0 0 11 7"><defs><linearGradient id="gd" x1="0" x2="0" y1="0" y2="1"><stop offset="0" stop-color="#1a1a1a"/><stop offset="1" stop-color="#8a8a8a"/></linearGradient></defs><path d="M1 1 L10 1 L5.5 6 Z" fill="url(#gd)"/></svg>
<div class="a" style="left:1141px;top:555px;width:19px;height:20px;border:1px solid #9c9c9c;border-radius:2px;background:linear-gradient(90deg,#f2f2f2 0,#e9e9e9 6px,#dbdbdb 6px,#cecece 100%);box-shadow:inset 0 0 0 1px rgba(255,255,255,.55)"></div>
<div class="a" style="left:0;top:0;width:1px;height:714px;background:#6e6e6e"></div>
<div class="a" style="left:1px;top:0;width:1px;height:712px;background:#848896"></div>
</body></html>
